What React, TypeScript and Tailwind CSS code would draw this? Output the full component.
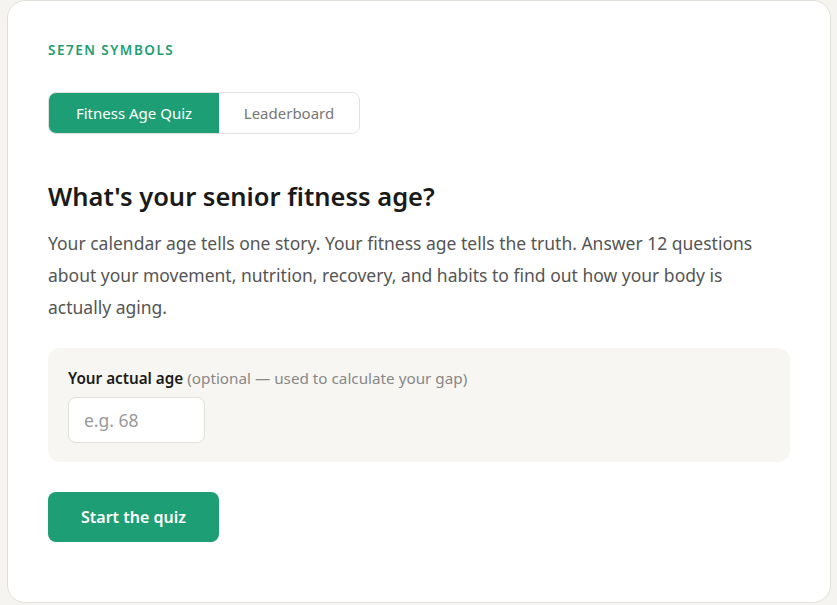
import React, { useState } from 'react';

const App: React.FC = () => {
  const [tab, setTab] = useState<'quiz' | 'board'>('quiz');
  const [age, setAge] = useState('');

  return (
    <div className="min-h-[605px] w-full bg-[#f5f4f0] font-['Noto_Sans','Open_Sans',sans-serif]">
      <div className="ml-[7px] w-[824px] h-[603px] bg-white border border-[#e2e0da] rounded-[18px] px-[40px] pt-[39px]">
        <div className="text-[13.5px] leading-5 font-semibold tracking-[0.11em] text-[#1e9e74]">SE7EN SYMBOLS</div>

        <div className="mt-8 inline-flex h-[42px] border border-[#e2e0da] rounded-[8px] overflow-hidden text-[15px]">
          <button
            onClick={() => setTab('quiz')}
            className={`w-[170px] ${tab === 'quiz' ? 'bg-[#1e9e74] text-white' : 'bg-white text-[#777]'}`}
          >
            Fitness Age Quiz
          </button>
          <button
            onClick={() => setTab('board')}
            className={`w-[140px] ${tab === 'board' ? 'bg-[#1e9e74] text-white' : 'bg-white text-[#777]'}`}
          >
            Leaderboard
          </button>
        </div>

        <h1 className="mt-[46px] text-[25.5px] leading-8 font-semibold text-[#1a1a1a]">What's your senior fitness age?</h1>
        <p className="mt-[15px] text-[17.5px] leading-8 text-[#555]">
          Your calendar age tells one story. Your fitness age tells the truth. Answer 12 questions about your movement, nutrition, recovery, and habits to find out how your body is actually aging.
        </p>

        <div className="mt-[25px] bg-[#f7f6f3] rounded-[12px] px-5 pt-5 pb-[19px]">
          <label className="block text-[15.25px] leading-5 text-[#888]">
            <span className="font-semibold text-[#1a1a1a]">Your actual age</span> (optional — used to calculate your gap)
          </label>
          <input
            value={age}
            onChange={(e) => setAge(e.target.value)}
            placeholder="e.g. 68"
            className="mt-[9px] w-[137px] h-[46px] bg-white border border-[#e2e0da] rounded-[8px] px-[15px] text-[17.5px] text-[#1a1a1a] placeholder:text-[#999] outline-none"
          />
        </div>

        <button className="mt-[30px] w-[171px] h-[50px] bg-[#1e9e74] text-white text-[16px] font-semibold rounded-[8px]">
          Start the quiz
        </button>
      </div>
    </div>
  );
};

export default App;
